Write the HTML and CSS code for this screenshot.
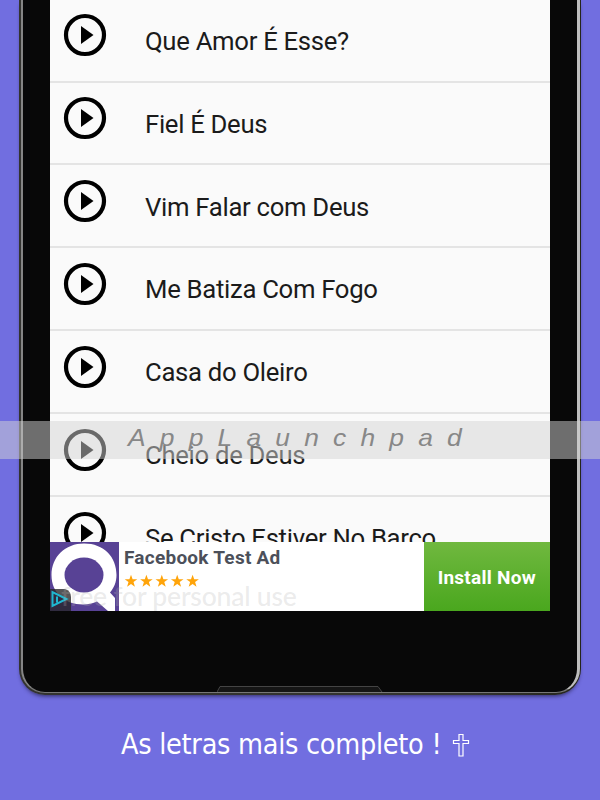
FILE: index.html
```
<!DOCTYPE html>
<html lang="pt">
<head>
<meta charset="utf-8">
<title>Letras</title>
<link rel="stylesheet" href="styles.css">
</head>
<body>
<svg class="defs" width="0" height="0"><symbol id="play" viewBox="0 0 44 44"><circle cx="22" cy="22" r="19" fill="none" stroke="#000" stroke-width="4.2"/><path d="M18 13v18l12.500-9z"/></symbol></svg>
<main class="page">
  <section class="device">
    <div class="bezel">
    <div class="screen">
      <ul class="songs">
        <li><svg><use href="#play"/></svg><span>Que Amor É Esse?</span></li>
        <li><svg><use href="#play"/></svg><span>Fiel É Deus</span></li>
        <li><svg><use href="#play"/></svg><span>Vim Falar com Deus</span></li>
        <li><svg><use href="#play"/></svg><span>Me Batiza Com Fogo</span></li>
        <li><svg><use href="#play"/></svg><span>Casa do Oleiro</span></li>
        <li><svg><use href="#play"/></svg><span>Cheio de Deus</span></li>
        <li><svg><use href="#play"/></svg><span>Se Cristo Estiver No Barco</span></li>
      </ul>
      <div class="ad">
        <svg class="logo" viewBox="0 0 69 69"><path fill="#584295" d="M0 0h69v69H0z"/><path fill="#fff" d="M34 1.500C54 1.500 66.500 15 66.500 33C66.500 40 64 46 60 50.500L65 56V69H58L47 59.500C43 61.500 38 62.500 33 62.500C15 62.500 1.500 51 1.500 33C1.500 15 15 1.500 34 1.500Z"/><ellipse cx="34" cy="33" rx="19.500" ry="17.500" fill="#584295"/><path d="M0 47H15Q21 49 21 55V69H0z" fill="#252527" opacity=".78"/><path d="M2.500 50v14l14-7zM7 54.500v6" fill="none" stroke="#20b8d0" stroke-width="2"/></svg>
        <div class="info"><strong>Facebook Test Ad</strong>
          <svg class="stars" viewBox="0 0 76 14"><defs><path id="star" d="M7 .8l1.600 4.500h4.700L9.500 8.100l1.400 4.700L7 10l-3.900 2.800 1.400-4.700L.7 5.300h4.700z"/></defs><g fill="#ffa40a"><use href="#star"/><use href="#star" x="15.400"/><use href="#star" x="30.800"/><use href="#star" x="46.200"/><use href="#star" x="61.600"/></g></svg>
        </div>
        <div class="install">Install Now</div>
        <div class="license">free for personal use</div>
      </div>
    </div>
    <svg class="lip" viewBox="0 0 166 6"><path d="M0 6L3 1H161L165 6z" fill="#151515"/><path d="M0 6L3 .5H161L165 6" fill="none" stroke="#444"/></svg>
    </div>
  </section>
  <footer class="caption"><span>As letras mais completo !</span><svg viewBox="0 0 18 24"><path d="M7 1.500h4v6h5.500v3H11V23H7V10.500H1.500v-3H7z" fill="none" stroke="#fff" stroke-width="1.200"/></svg></footer>
  <div class="band"><span>AppLaunchpad</span></div>
</main>
</body>
</html>
```
FILE: styles.css
```
* { box-sizing: border-box; }
body { margin: 0; }
.defs { position: absolute; }
.page {
  position: relative;
  width: 600px;
  height: 800px;
  overflow: hidden;
  background: #716ee0;
  font-family: Roboto, sans-serif;
}
.device {
  width: 562px;
  height: 695px;
  margin-left: 19px;
  padding: 0 1px 2px 2px;
  border-radius: 0 0 26px 26px;
  background: linear-gradient(to right, #333330 80%, #25251c);
  box-shadow: 0 3px 4px -2px rgba(25, 20, 55, .75);
}
.bezel {
  display: flex;
  flex-direction: column;
  align-items: center;
  justify-content: space-between;
  height: 693px;
  border: solid;
  border-width: 0 3px 1px 2px;
  border-color: #777 #bdbdbd #777 #858585;
  border-radius: 0 0 24px 24px;
  background: #080808;
}
.screen {
  display: flex;
  flex-direction: column;
  width: 500px;
  height: 611px;
  background: #fafafa;
}
.songs {
  height: 542px;
  margin: 0;
  padding: 0;
  overflow: hidden;
  list-style: none;
}
.songs li {
  display: flex;
  align-items: center;
  gap: 37px;
  height: 82.9px;
  padding-left: 13px;
  border-bottom: 2px solid #e4e4e4;
  font-size: 25.7px;
  line-height: 30px;
  letter-spacing: -.3px;
  color: #1b1b1b;
  white-space: nowrap;
}
.songs li:first-child { margin-top: -.4px; }
.songs li svg { width: 44px; height: 44px; margin-top: -9.500px; }
.songs li span { margin: 1.500px 0 0 1px; }
.ad {
  position: relative;
  display: flex;
  height: 69px;
  background: #fff;
}
.logo { width: 69px; height: 69px; }
.info { display: flex; flex: 1; flex-direction: column; padding: 4px 0 0 5px; }
.info strong {
  font-size: 19px;
  line-height: 24px;
  letter-spacing: .25px;
  color: #4c505a;
}
.stars { width: 76px; height: 14px; margin-top: 4px; }
.install {
  display: flex;
  align-items: center;
  justify-content: center;
  width: 126.500px;
  padding-top: 1px;
  background: linear-gradient(#70b83f, #4aa71e);
  color: #fff;
  font-size: 19px;
  font-weight: 700;
  letter-spacing: .25px;
}
.license {
  position: absolute;
  left: 11px;
  top: 38px;
  font: 500 26.500px/32px Lato, sans-serif;
  letter-spacing: -.2px;
  color: rgba(180, 180, 180, .27);
  white-space: nowrap;
}
.lip { width: 166px; height: 6px; }
.caption {
  display: flex;
  align-items: center;
  gap: 11px;
  height: 40px;
  margin: 30px 0 0 121px;
  color: #fff;
  font: 28.500px/40px "DejaVu Sans Condensed", "DejaVu Sans", sans-serif;
  font-stretch: condensed;
  letter-spacing: -.27px;
  white-space: nowrap;
}
.caption svg { width: 18px; height: 24px; }
.band {
  position: absolute;
  left: 0;
  top: 421px;
  display: flex;
  align-items: center;
  width: 100%;
  height: 38px;
  padding-left: 128px;
  background: rgba(212, 212, 212, .5);
  color: #888;
  font: italic 24px/34px "Liberation Sans", sans-serif;
  letter-spacing: 12.900px;
}
.band span {
  margin-top: -4px;
  transform: scaleX(1.1);
  transform-origin: left;
}
```
